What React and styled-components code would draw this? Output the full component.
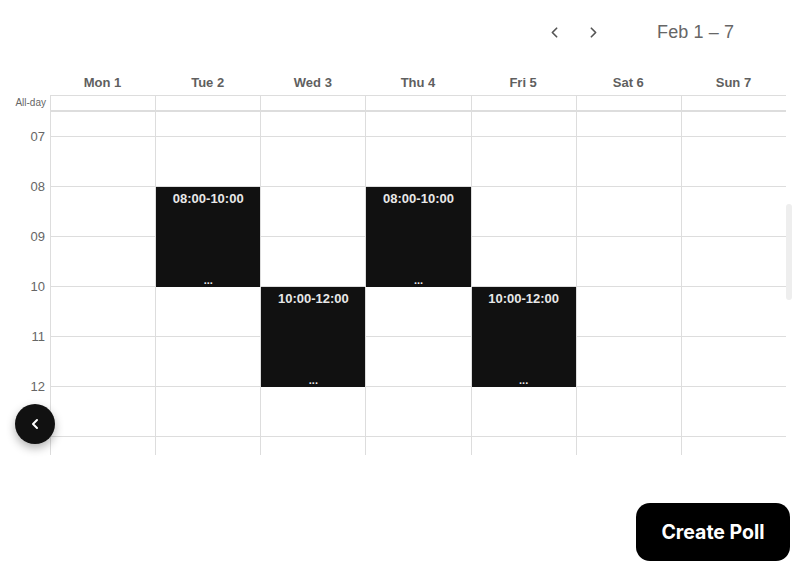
import React from "react";
import styled, { createGlobalStyle } from "styled-components";
import { ChevronLeft, ChevronRight } from "lucide-react";

const Global = createGlobalStyle`
  html, body { margin: 0; padding: 0; background: #fff; }
  body { font-family: "Liberation Sans", Arial, sans-serif; }
  * { box-sizing: border-box; }
`;

const Page = styled.div`
  position: relative;
  width: 805px;
  height: 568px;
  overflow: hidden;
  background: #fff;
`;

const TopBar = styled.div`
  height: 64px;
  display: flex;
  align-items: center;
  justify-content: flex-end;
  padding-right: 71px;
`;

const NavButton = styled.button`
  border: none;
  background: none;
  padding: 0;
  width: 20px;
  height: 24px;
  display: flex;
  align-items: center;
  justify-content: center;
  color: #555;
  cursor: pointer;
  margin-right: ${(p) => p.$gap}px;
`;

const RangeTitle = styled.div`
  font-size: 18px;
  color: #666;
  letter-spacing: 0.1px;
`;

const Calendar = styled.div`
  width: 786px;
  padding-top: 6px;
`;

const Row = styled.div`
  display: grid;
  grid-template-columns: 50px repeat(7, 1fr);
`;

const DayHead = styled.div`
  height: 25px;
  display: flex;
  align-items: center;
  justify-content: center;
  font-size: 13px;
  font-weight: 700;
  color: #5f5f5f;
`;

const AllDayLabel = styled.div`
  display: flex;
  align-items: center;
  justify-content: flex-end;
  padding-right: 4px;
  font-size: 10px;
  color: #666;
  height: 17px;
  padding-bottom: 3px;
`;

const AllDayCell = styled.div`
  height: 17px;
  border-top: 1px solid #ddd;
  border-left: 1px solid #ddd;
  border-bottom: 2px solid #ddd;
`;

const Body = styled.div`
  display: grid;
  grid-template-columns: 50px repeat(7, 1fr);
  height: 343px;
  overflow: hidden;
  position: relative;
`;

const Gutter = styled.div`
  display: flex;
  flex-direction: column;
  margin-top: -1px;
`;

const HourLabel = styled.div`
  height: 50px;
  flex: none;
  display: flex;
  align-items: center;
  justify-content: flex-end;
  padding-right: 5px;
  font-size: 13px;
  color: #666;
`;

const DayCol = styled.div`
  position: relative;
  border-left: 1px solid #ddd;
  display: flex;
  flex-direction: column;
`;

const Slot = styled.div`
  flex: none;
  height: ${(p) => p.$h}px;
  border-bottom: 1px solid #ddd;
`;

const Event = styled.div`
  position: absolute;
  left: 0;
  right: 0;
  background: #111;
  color: #e8e8e8;
  display: flex;
  flex-direction: column;
  align-items: center;
  justify-content: space-between;
  padding: 4px 4px 1px;
  z-index: 1;
`;

const EventTime = styled.div`
  font-size: 13px;
  font-weight: 700;
  line-height: 16px;
`;

const EventMore = styled.div`
  font-size: 11px;
  font-weight: 700;
  line-height: 12px;
`;

const ScrollThumb = styled.div`
  position: absolute;
  left: 786px;
  top: 204px;
  width: 6px;
  height: 96px;
  border-radius: 3px;
  background: #eeeeee;
`;

const FloatButton = styled.button`
  position: absolute;
  left: 15px;
  top: 404px;
  width: 40px;
  height: 40px;
  border-radius: 50%;
  border: none;
  background: #111;
  color: #fff;
  display: flex;
  align-items: center;
  justify-content: center;
  padding: 0;
  box-shadow: 0 4px 10px rgba(0, 0, 0, 0.3);
  cursor: pointer;
`;

const CreateButton = styled.button`
  position: absolute;
  right: 15px;
  bottom: 7px;
  width: 154px;
  height: 58px;
  border-radius: 14px;
  border: none;
  background: #000;
  color: #fff;
  font-family: "Inter", "Open Sans", sans-serif;
  font-weight: 700;
  font-size: 19.5px;
  cursor: pointer;
`;

const days = ["Mon 1", "Tue 2", "Wed 3", "Thu 4", "Fri 5", "Sat 6", "Sun 7"];
const hours = ["07", "08", "09", "10", "11", "12", "13"];
const events = [
  { day: 1, start: 8, end: 10 },
  { day: 2, start: 10, end: 12 },
  { day: 3, start: 8, end: 10 },
  { day: 4, start: 10, end: 12 },
];
const pad = (n) => String(n).padStart(2, "0");

export default function App() {
  return (
    <Page>
      <Global />
      <TopBar>
        <NavButton $gap={19} aria-label="Previous">
          <ChevronLeft size={17} strokeWidth={2.4} />
        </NavButton>
        <NavButton $gap={54} aria-label="Next">
          <ChevronRight size={17} strokeWidth={2.4} />
        </NavButton>
        <RangeTitle>Feb 1 – 7</RangeTitle>
      </TopBar>
      <Calendar>
        <Row>
          <div />
          {days.map((d) => (
            <DayHead key={d}>{d}</DayHead>
          ))}
        </Row>
        <Row>
          <AllDayLabel>All-day</AllDayLabel>
          {days.map((d) => (
            <AllDayCell key={d} />
          ))}
        </Row>
        <Body>
          <Gutter>
            {hours.map((h) => (
              <HourLabel key={h}>{h}</HourLabel>
            ))}
          </Gutter>
          {days.map((d, i) => (
            <DayCol key={d}>
              <Slot $h={25} />
              {[0, 1, 2, 3, 4, 5, 6].map((k) => (
                <Slot key={k} $h={50} />
              ))}
              {events
                .filter((e) => e.day === i)
                .map((e) => (
                  <Event
                    key={e.start}
                    style={{
                      top: 25 + (e.start - 7) * 50,
                      height: (e.end - e.start) * 50,
                    }}
                  >
                    <EventTime>
                      {pad(e.start)}:00-{pad(e.end)}:00
                    </EventTime>
                    <EventMore>...</EventMore>
                  </Event>
                ))}
            </DayCol>
          ))}
        </Body>
      </Calendar>
      <ScrollThumb />
      <FloatButton aria-label="Back">
        <ChevronLeft size={16} strokeWidth={3} />
      </FloatButton>
      <CreateButton>Create Poll</CreateButton>
    </Page>
  );
}
